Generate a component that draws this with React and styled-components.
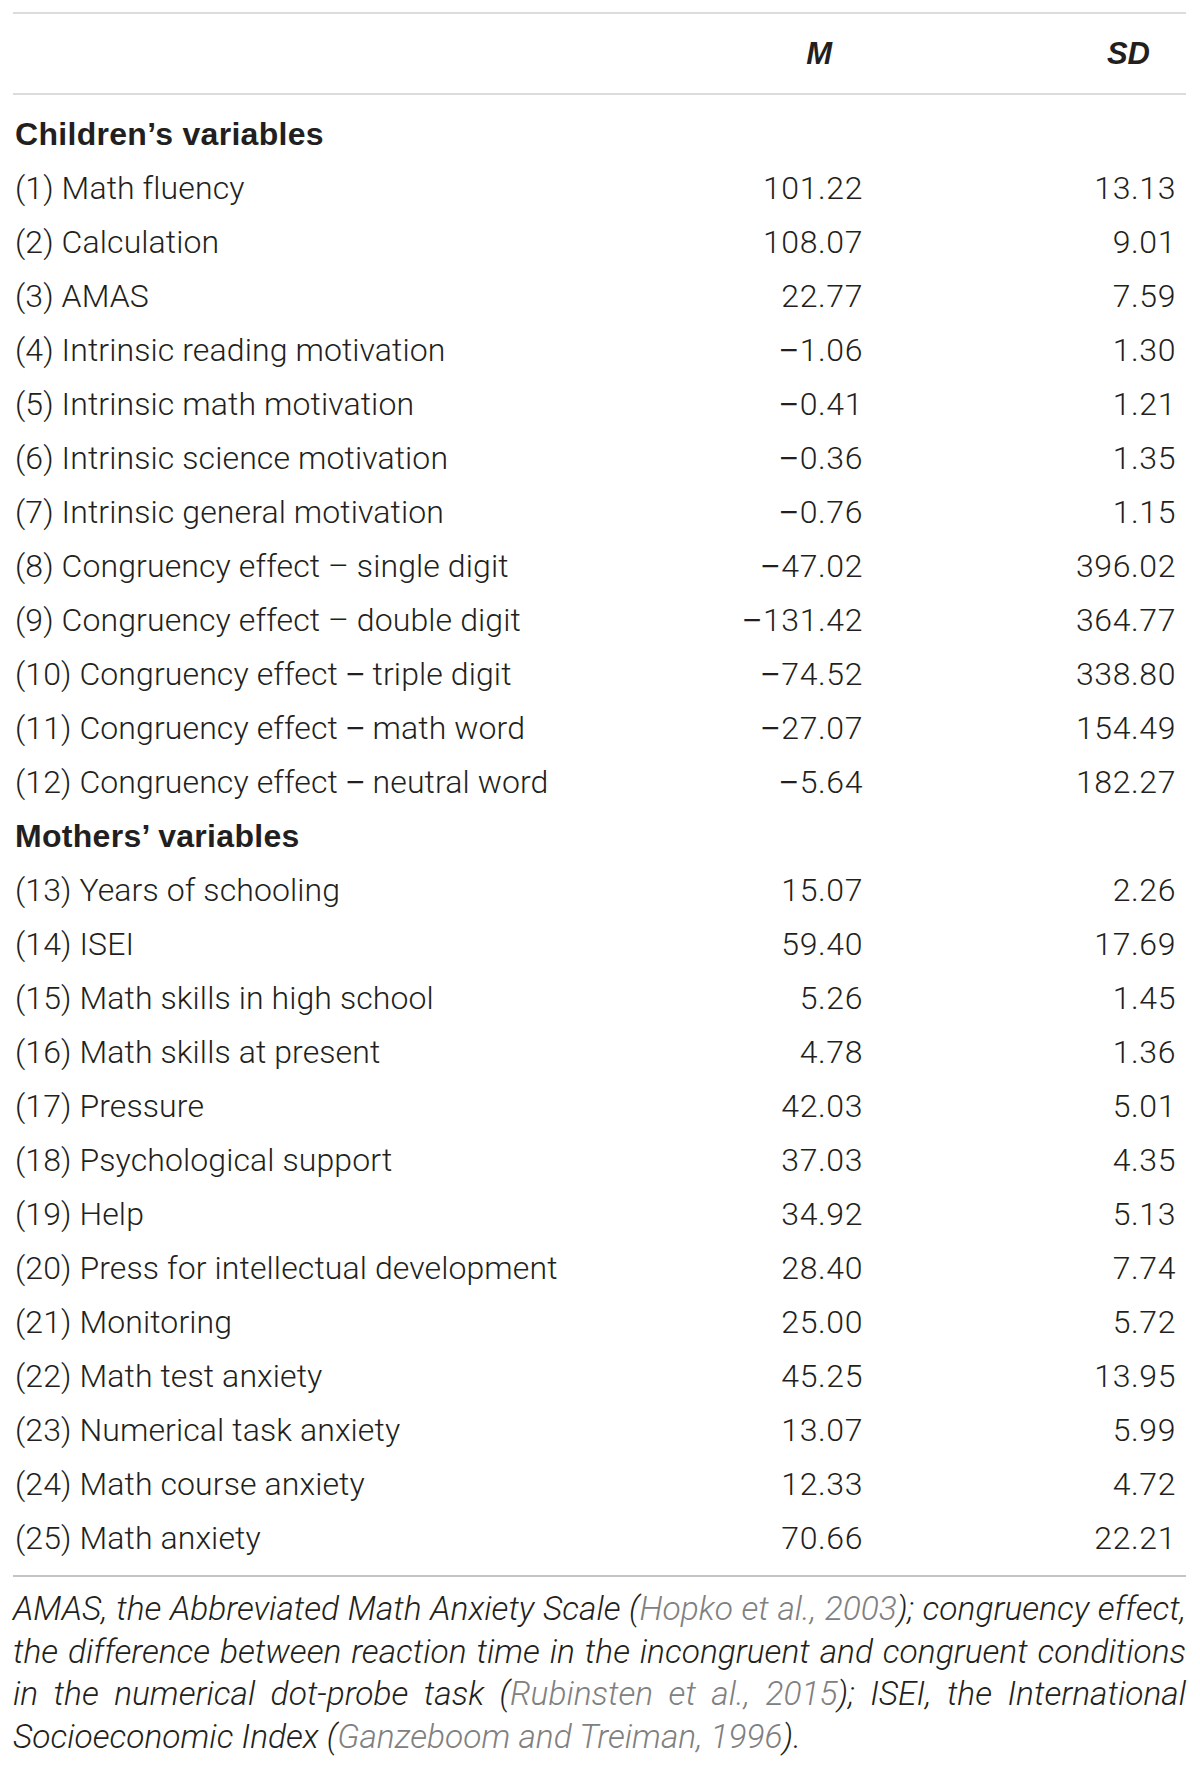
import React from "react";
import styled, { createGlobalStyle } from "styled-components";

const GlobalStyle = createGlobalStyle`
  html, body { margin: 0; padding: 0; background: #ffffff; }
  body { font-family: "Roboto", "Liberation Sans", Arial, sans-serif; }
`;

const Page = styled.div`
  padding: 12px 14px 20px 13px;
  width: 1173px;
  color: #231f20;
`;

const Row = styled.div`
  display: grid;
  grid-template-columns: minmax(0, 1fr) 180px 180px;
  column-gap: 133px;
  align-items: center;
  height: ${(p) => p.$h || 54}px;
  padding: 0 10px 0 2px;
  font-size: 32px;
  font-weight: 300;
  letter-spacing: 0.1px;
`;

const HeadRow = styled(Row)`
  border-top: 2px solid #dcdcdc;
  border-bottom: 2px solid #dcdcdc;
`;

const HeadCell = styled.div`
  font-weight: 700;
  font-style: italic;
  text-align: right;
  padding-right: ${(p) => p.$pr || 0}px;
  font-family: "Liberation Sans", Arial, sans-serif;
  font-size: 31px;
  letter-spacing: 0;
`;

const Body = styled.div`
  padding: 12px 0 10px;
`;

const Label = styled.div`
  white-space: nowrap;
`;

const Section = styled.div`
  font-weight: 700;
  font-family: "Liberation Sans", Arial, sans-serif;
  font-size: 32px;
  letter-spacing: 0.3px;
  white-space: nowrap;
`;

const Num = styled.div`
  text-align: right;
  white-space: nowrap;
  letter-spacing: 0.6px;
`;

const Minus = styled.span`
  font-family: "Liberation Sans", Arial, sans-serif;
  font-weight: 400;
  margin-right: 1px;
`;

const Dash = styled.span`
  font-family: "Liberation Sans", Arial, sans-serif;
  font-weight: 400;
`;

const Note = styled.div`
  border-top: 2px solid #c4c4c4;
  padding-top: 11px;
  font-style: italic;
  font-weight: 300;
  font-size: 33.5px;
  line-height: 42.6px;
`;

const NoteLine = styled.div`
  white-space: nowrap;
  text-align: ${(p) => (p.$last ? "left" : "justify")};
  text-align-last: ${(p) => (p.$last ? "left" : "justify")};
  letter-spacing: ${(p) => p.$ls || 0}px;
  word-spacing: ${(p) => p.$ws || 0}px;
`;

const Cite = styled.span`
  color: #808080;
`;

const children = [
  ["(1) Math fluency", "101.22", "13.13"],
  ["(2) Calculation", "108.07", "9.01"],
  ["(3) AMAS", "22.77", "7.59"],
  ["(4) Intrinsic reading motivation", "-1.06", "1.30"],
  ["(5) Intrinsic math motivation", "-0.41", "1.21"],
  ["(6) Intrinsic science motivation", "-0.36", "1.35"],
  ["(7) Intrinsic general motivation", "-0.76", "1.15"],
  ["(8) Congruency effect \u2013 single digit", "-47.02", "396.02"],
  ["(9) Congruency effect \u2013 double digit", "-131.42", "364.77"],
  ["(10) Congruency effect | triple digit", "-74.52", "338.80"],
  ["(11) Congruency effect | math word", "-27.07", "154.49"],
  ["(12) Congruency effect | neutral word", "-5.64", "182.27"],
];

const mothers = [
  ["(13) Years of schooling", "15.07", "2.26"],
  ["(14) ISEI", "59.40", "17.69"],
  ["(15) Math skills in high school", "5.26", "1.45"],
  ["(16) Math skills at present", "4.78", "1.36"],
  ["(17) Pressure", "42.03", "5.01"],
  ["(18) Psychological support", "37.03", "4.35"],
  ["(19) Help", "34.92", "5.13"],
  ["(20) Press for intellectual development", "28.40", "7.74"],
  ["(21) Monitoring", "25.00", "5.72"],
  ["(22) Math test anxiety", "45.25", "13.95"],
  ["(23) Numerical task anxiety", "13.07", "5.99"],
  ["(24) Math course anxiety", "12.33", "4.72"],
  ["(25) Math anxiety", "70.66", "22.21"],
];

const renderLabel = (text) => {
  const i = text.indexOf("|");
  if (i < 0) return text;
  return (
    <>
      {text.slice(0, i)}
      <Dash>{"\u2212"}</Dash>
      {text.slice(i + 1)}
    </>
  );
};

const renderNum = (v) =>
  v.startsWith("-") ? (
    <>
      <Minus>{"\u2212"}</Minus>
      {v.slice(1)}
    </>
  ) : (
    v
  );

const DataRow = ({ r }) => (
  <Row>
    <Label>{renderLabel(r[0])}</Label>
    <Num>{renderNum(r[1])}</Num>
    <Num>{renderNum(r[2])}</Num>
  </Row>
);

export default function App() {
  return (
    <Page>
      <GlobalStyle />
      <HeadRow $h={79}>
        <div />
        <HeadCell $pr={31}>M</HeadCell>
        <HeadCell $pr={26}>SD</HeadCell>
      </HeadRow>
      <Body>
        <Row>
          <Section>Children’s variables</Section>
        </Row>
        {children.map((r) => (
          <DataRow key={r[0]} r={r} />
        ))}
        <Row>
          <Section>Mothers’ variables</Section>
        </Row>
        {mothers.map((r) => (
          <DataRow key={r[0]} r={r} />
        ))}
      </Body>
      <Note>
        <NoteLine $ws={-3}>
          AMAS, the Abbreviated Math Anxiety Scale (<Cite>Hopko et al., 2003</Cite>); congruency effect,
        </NoteLine>
        <NoteLine>
          the difference between reaction time in the incongruent and congruent conditions
        </NoteLine>
        <NoteLine>
          in the numerical dot-probe task (<Cite>Rubinsten et al., 2015</Cite>); ISEI, the International
        </NoteLine>
        <NoteLine $last>
          Socioeconomic Index (<Cite>Ganzeboom and Treiman, 1996</Cite>).
        </NoteLine>
      </Note>
    </Page>
  );
}
